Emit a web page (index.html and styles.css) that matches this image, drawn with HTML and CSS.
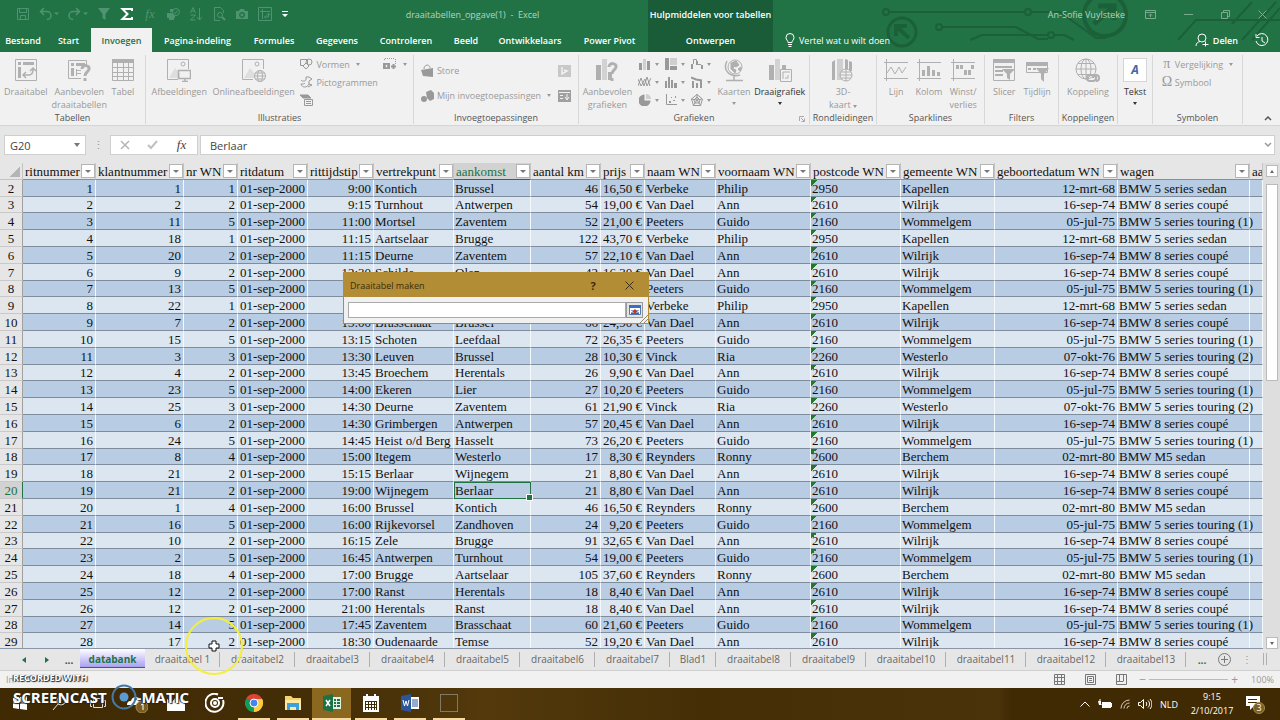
FILE: index.html
```html
<!DOCTYPE html>
<html lang="nl">
<head>
    <meta charset="UTF-8">
    <meta name="viewport" content="width=device-width, initial-scale=1.0">
    <title>draaitabellen_opgave(1) - Excel</title>
    <link rel="stylesheet" href="styles.css">
</head>
<body>
    <header class="top">
        <!-- circuit decoration -->
        <svg class="circuit" width="400" height="52" viewBox="0 0 400 52" fill="none" stroke="#1b6039" stroke-width="2">
            <circle cx="6" cy="12" r="3"/><path d="M9 12H145M151 12H158"/><circle cx="148" cy="12" r="3"/>
            <path d="M158 12 L180 12 L216 38 H226"/>
            <circle cx="59" cy="27" r="3"/><path d="M62 27H136L158 39H168"/>
            <path d="M90 40 L102 35 H168"/><circle cx="171" cy="35" r="3"/><path d="M174 35H184L194 40"/>
            <circle cx="22" cy="32" r="14" stroke-width="3"/><path d="M29 38L17 27M16 36V26H27" stroke-width="4"/>
            <circle cx="225" cy="15" r="21" stroke-width="4"/><path d="M214 24L232 8M218 6H234V20" stroke-width="5"/>
            <path d="M298 40L316 20H400M362 40L396 2M372 40L400 8M352 24L372 2"/>
        </svg>

        <div class="titlebar">
            <div class="quick">
                <button aria-label="Opslaan"><svg width="14" height="14" viewBox="0 0 14 14" fill="none" stroke="currentColor"><path d="M1.500 1.500h11v11h-11zM3.500 1.500v4h7v-4M4.500 12.500v-4h5v4"/></svg></button>
                <button aria-label="Ongedaan maken"><svg width="20" height="14" viewBox="0 0 20 14" fill="none" stroke="currentColor" stroke-width="1.500"><path d="M5 1L1.500 4.500 5 8M2 4.500h6a3.500 3.500 0 0 1 0 8"/><path d="M15 5.500h5l-2.500 2.500z" fill="currentColor" stroke="none"/></svg></button>
                <button aria-label="Opnieuw"><svg width="20" height="14" viewBox="0 0 20 14" fill="none" stroke="currentColor" stroke-width="1.500"><path d="M8 1l3.500 3.500L8 8M11 4.500H5a3.500 3.500 0 0 0 0 8"/><path d="M15 5.500h5l-2.500 2.500z" fill="currentColor" stroke="none"/></svg></button>
                <button aria-label="Filter"><svg width="14" height="14" viewBox="0 0 14 14" fill="currentColor"><path d="M1 1h12L8.500 7v6l-3-2V7z"/></svg></button>
                <button class="sum" aria-label="AutoSom"><svg width="14" height="14" viewBox="0 0 14 14" fill="none" stroke="currentColor" stroke-width="2"><path d="M12 4V2H2.500L7.500 7l-5 5H12v-2"/></svg></button>
                <button class="fx" aria-label="Functie invoegen"><i>fx</i></button>
                <button aria-label="Afdrukken"><svg width="14" height="14" viewBox="0 0 14 14" fill="currentColor"><path d="M4 2h5v3H4zM1 6h8v5H8v2H3v-2H1z"/><circle cx="10" cy="5" r="3.500" fill="#217346" stroke="currentColor"/><path d="M8.500 5l1 1.500 2-3" fill="none" stroke="currentColor"/></svg></button>
                <button aria-label="Sorteren"><svg width="14" height="14" viewBox="0 0 14 14" fill="none" stroke="currentColor"><path d="M1.500 6L4 .500 6.500 6M2.500 4h3M1.500 8h5l-5 5h5M10.500 1v12M8 10l2.500 3 2.500-3"/></svg></button>
                <button aria-label="Afdrukvoorbeeld"><svg width="14" height="14" viewBox="0 0 14 14" fill="none" stroke="currentColor"><path d="M2.500 13.500V.500h6l3 3V6M2.500 13.500H8"/><circle cx="8" cy="8" r="2.500"/><path d="M10 10l3 3" stroke-width="2"/></svg></button>
                <button aria-label="Camera"><svg width="14" height="14" viewBox="0 0 14 14" fill="currentColor" fill-rule="evenodd"><path d="M1 4h3l1-2h4l1 2h3v8H1zM7 5a3 3 0 1 0 .1 0zM7 6.500a1.500 1.500 0 1 1-.1 0z"/></svg></button>
                <button aria-label="Draaitabel"><svg width="14" height="14" viewBox="0 0 14 14" fill="none" stroke="currentColor"><path d="M.500.500h13v13H.500zM4.500 2v10M2 4.500h10M7 10h3.500V7M8.500 8l2-1.500 2 1.500M8 8.500L6.500 10 8 11.500"/></svg></button>
                <button class="more" aria-label="Werkbalk aanpassen"><svg width="8" height="8" viewBox="0 0 8 8" fill="currentColor"><path d="M1 1h6v1H1zM1 4h6L4 7z"/></svg></button>
            </div>
            <div class="doc-title">draaitabellen_opgave(1) &nbsp;-&nbsp; Excel</div>
            <div class="context-title">Hulpmiddelen voor tabellen</div>
            <div class="account">An-Sofie Vuylsteke</div>
            <div class="window-btns">
                <button aria-label="Lintweergave"><svg width="11" height="9" viewBox="0 0 11 9" fill="none" stroke="currentColor"><path d="M.500.500h10v8H.500zM.500 2.500h10M5.500 7V4M4 5.500L5.500 4 7 5.500"/></svg></button>
                <button aria-label="Minimaliseren"><svg width="9" height="9" viewBox="0 0 9 9" stroke="currentColor"><path d="M0 4.500h9"/></svg></button>
                <button aria-label="Verkleinen"><svg width="9" height="9" viewBox="0 0 9 9" fill="none" stroke="currentColor"><path d="M.500 2.500h6v6h-6zM2.500 2.500v-2h6v6h-2"/></svg></button>
                <button aria-label="Sluiten"><svg width="9" height="9" viewBox="0 0 9 9" stroke="currentColor"><path d="M.500.500l8 8M8.500.500l-8 8"/></svg></button>
            </div>
        </div>

        <nav class="tabs">
            <button>Bestand</button>
            <button>Start</button>
            <button class="active">Invoegen</button>
            <button>Pagina-indeling</button>
            <button>Formules</button>
            <button>Gegevens</button>
            <button>Controleren</button>
            <button>Beeld</button>
            <button>Ontwikkelaars</button>
            <button>Power Pivot</button>
            <button class="context">Ontwerpen</button>
            <button class="tell"><svg width="10" height="14" viewBox="0 0 10 14" fill="none" stroke="currentColor"><path d="M3 9.500C3 7.500 1 7 1 4.500a4 4 0 0 1 8 0C9 7 7 7.500 7 9.500zM3 11.500h4M3.500 13.500h3"/></svg>Vertel wat u wilt doen</button>
            <button class="share"><svg width="14" height="14" viewBox="0 0 14 14" fill="none" stroke="currentColor"><circle cx="7" cy="5" r="4"/><path d="M1 13c0-3 2-4 4-4.500M7.500 11.500h6M10.500 8.500v5"/></svg>Delen</button>
            <button class="history" aria-label="Versiegeschiedenis"><svg width="14" height="14" viewBox="0 0 14 14" fill="none" stroke="currentColor"><path d="M2 3a6 6 0 1 1-1 5M1 1v3.500h3.500M7 4v4l3 2"/></svg></button>
        </nav>
    </header>

    <section class="ribbon">
        <div class="group tables">
            <div class="tools">
                <button class="big"><svg width="24" height="24" viewBox="0 0 24 24" fill="none" stroke="currentColor"><path d="M1.500 1.500h21v21h-21z"/><path d="M4 4h3v3H4zM9 4h11v3H9zM4 9h3v11H4z" fill="currentColor" stroke="none"/><path d="M10 17h5c3 0 4-2 4-6M16 13l3-3 3 3M12 14l-3 3 3 3" stroke-width="1.500"/></svg>Draaitabel</button>
                <button class="big"><svg width="24" height="24" viewBox="0 0 24 24" fill="none" stroke="currentColor"><path d="M14 20.500H1.500v-18h18V7"/><path d="M4 5h3v3H4zM9 5h9v3H9zM4 10h3v8H4z" fill="currentColor" stroke="none"/><path d="M9.500 11v7M9 12.500h5M9 15.500h5"/><path d="M15 11c0-5 8-4 7 0-.500 3-4 3-4 7M18 20v3" stroke-width="3"/></svg>Aanbevolen<br>draaitabellen</button>
                <button class="big"><svg width="24" height="24" viewBox="0 0 24 24" fill="none" stroke="currentColor"><path d="M1.500 1.500h21v21h-21zM1 9.500h22M1 14.500h22M1 18.500h22M6.500 5v17M12.500 5v17M17.500 5v17"/><path d="M1 1h22v4H1z" fill="currentColor" stroke="none"/></svg>Tabel</button>
            </div>
            <h2>Tabellen</h2>
        </div>
        <div class="group pictures">
            <div class="tools">
                <button class="big"><svg width="24" height="24" viewBox="0 0 24 24" fill="none" stroke="currentColor"><path d="M11 21.500H.500v-20h21V11"/><path d="M2 20l6-10 5 6v4z" fill="#dedede" stroke="none"/><circle cx="16" cy="6" r="2"/><path d="M11.500 12.500h12v8h-12zM15 23.500h6M18 20v3" stroke-width="1.500"/></svg>Afbeeldingen</button>
                <button class="big"><svg width="24" height="24" viewBox="0 0 24 24" fill="none" stroke="currentColor"><path d="M11 21.500H.500v-20h21V11"/><path d="M2 20l6-10 5 6v4z" fill="#dedede" stroke="none"/><circle cx="15" cy="6" r="2"/><circle cx="18" cy="18" r="5.500"/><ellipse cx="18" cy="18" rx="2.500" ry="5.500"/><path d="M12.500 18h11M13 15h10M13 21h10"/></svg>Onlineafbeeldingen</button>
                <div class="stack">
                    <button><svg width="13" height="12" viewBox="0 0 13 12" fill="none" stroke="currentColor"><path d="M.500 1.500h7v6h-7z"/><circle cx="9" cy="4" r="3"/><path d="M6 5l3 3-3 3-3-3z" fill="#f1f1f1"/></svg>Vormen <span class="arrow"></span></button>
                    <button><svg width="13" height="12" viewBox="0 0 13 12" fill="none" stroke="currentColor"><path d="M1 4c2 2 4 1 5 0V1h3l3 2-3 2v3c-2 4-7 4-8 0 2 0 3 0 4-1M9 8l3 1-4 2"/></svg>Pictogrammen</button>
                    <button aria-label="SmartArt"><svg width="13" height="12" viewBox="0 0 13 12" fill="none" stroke="currentColor"><path d="M0 1h8l3 3H3z" fill="currentColor"/><path d="M4.500 5.500h8v6h-8zM6 7.500h5M6 9.500h5" fill="#f1f1f1"/></svg></button>
                </div>
                <div class="stack">
                    <button aria-label="Schermopname"><svg width="14" height="12" viewBox="0 0 14 12" fill="none" stroke="currentColor"><path d="M1.500 1v2M12.500 1v5M2 .500h10" stroke-dasharray="1 1"/><path d="M0 5h7v6H0z" fill="currentColor" stroke="none"/><circle cx="3.500" cy="8" r="1.500" fill="#f1f1f1"/><path d="M8 8.500h5M10.500 6v5" stroke-width="2"/></svg><span class="arrow"></span></button>
                </div>
            </div>
            <h2>Illustraties</h2>
        </div>
        <div class="group addins">
            <div class="tools">
                <div class="stack wide">
                    <button><svg width="13" height="14" viewBox="0 0 13 14" fill="currentColor"><path d="M0 6l12-2v9l-10-1z"/><path d="M3 5c0-5 6-5 6-1" fill="none" stroke="currentColor"/></svg>Store</button>
                    <button><svg width="13" height="14" viewBox="0 0 13 14" fill="currentColor"><path d="M5 3l5-2 3 3v6l-4 2-3-3z"/><circle cx="3" cy="10" r="3"/></svg>Mijn invoegtoepassingen <span class="arrow"></span></button>
                </div>
                <div class="stack wide">
                    <button aria-label="Bing Maps"><svg width="13" height="14" viewBox="0 0 13 14" fill="none"><path d="M0 1h13v12H0z" fill="#c8c8c8"/><path d="M4 3v7l5-3-3-1" stroke="#f1f1f1" stroke-width="1.500"/></svg></button>
                    <button aria-label="People Graph"><svg width="13" height="14" viewBox="0 0 13 14" fill="none"><path d="M0 1h13v12H0z" fill="#a0a0a0"/><path d="M1 3.500h11M2 6.500h3M2 9.500h3M9 5v5M7 8l2 3 2-3" stroke="#f1f1f1"/></svg></button>
                </div>
            </div>
            <h2>Invoegtoepassingen</h2>
        </div>
        <div class="group charts">
            <div class="tools">
                <button class="big"><svg width="24" height="24" viewBox="0 0 24 24" fill="currentColor"><path d="M1 7h5v15H1zM13 14h4v8h-4z"/><path d="M7 1h5v21H7z" fill="#d2d2d2"/><path d="M14 9c0-5 8-4 7 0-.500 3-4 3-4 7M17 20v3" fill="none" stroke="currentColor" stroke-width="3"/></svg>Aanbevolen<br>grafieken</button>
                <div class="chart-grid">
                    <button aria-label="Kolomdiagram"><svg width="12" height="12" viewBox="0 0 12 12" fill="currentColor"><path d="M0 5h3v7H0zM8 3h3v9H8z"/><path d="M4 1h3v11H4z" fill="#cfcfcf"/></svg><span class="arrow"></span></button>
                    <button aria-label="Hiërarchie"><svg width="12" height="12" viewBox="0 0 12 12" fill="currentColor"><path d="M0 0h4v12H0zM5 8h7v4H5z"/><path d="M5 0h7v7H5z" fill="#cfcfcf"/></svg><span class="arrow"></span></button>
                    <button aria-label="Waterval"><svg width="12" height="12" viewBox="0 0 12 12" fill="currentColor"><path d="M0 6h2v5H0zM5 3h2v4H5zM10 7h2v4h-2z"/><path d="M2.500 6V1.500h3V4M7 6.500h3" fill="none" stroke="currentColor"/></svg><span class="arrow"></span></button>
                    <button aria-label="Lijndiagram"><svg width="13" height="12" viewBox="0 0 13 12" fill="none" stroke="currentColor"><path d="M0 10L3 2l3 8 3-9 3 9M0 3l3 7 4-7 2 7 4-8"/></svg><span class="arrow"></span></button>
                    <button aria-label="Statistisch"><svg width="12" height="12" viewBox="0 0 12 12" fill="currentColor"><path d="M0 5h2v7H0zM3 1h2v11H3zM6 4h2v8H6zM9 7h3v5H9z"/></svg><span class="arrow"></span></button>
                    <button aria-label="Combinatie"><svg width="12" height="12" viewBox="0 0 12 12" fill="currentColor"><path d="M1 5h2v7H1zM5 7h2v5H5zM9 5h2v7H9z"/><path d="M0 1.500l5 2 6 1" fill="none" stroke="currentColor" stroke-width="2"/></svg><span class="arrow"></span></button>
                    <button aria-label="Cirkeldiagram"><svg width="12" height="12" viewBox="0 0 12 12" fill="currentColor"><path d="M5.500.500v6h6a6 6 0 1 1-6-6z"/><path d="M7 0a5 5 0 0 1 5 5H7z" fill="#cfcfcf"/></svg><span class="arrow"></span></button>
                    <button aria-label="Spreiding"><svg width="12" height="12" viewBox="0 0 12 12" fill="currentColor"><path d="M1.500 0v10.500H12" fill="none" stroke="currentColor"/><path d="M4 7h2v2H4zM6 3h1v1H6zM8 6h2v1H8zM10 2h1v2h-1z"/></svg><span class="arrow"></span></button>
                    <button aria-label="Radar"><svg width="12" height="12" viewBox="0 0 12 12" fill="none" stroke="currentColor"><path d="M6 .500L11.500 5l-2 6.500h-7L.500 5zM6 3l3 3-1 3H4L3 6zM6 0v6l5-1M6 6l4 6M6 6l-4 6M6 6L0 5"/></svg><span class="arrow"></span></button>
                </div>
                <button class="big"><svg width="24" height="24" viewBox="0 0 24 24" fill="none" stroke="currentColor"><circle cx="13" cy="9" r="7"/><path d="M9 5l5-2 3 4-3 2-2-1-1 3 3 1-1 3-4-4zM16 11l3-2-1 4z" fill="currentColor"/><path d="M5 3c-5 9 3 17 13 14M12 18v4M4 22.500h17" stroke-width="1.500"/></svg>Kaarten<span class="arrow"></span></button>
                <button class="big enabled"><svg width="24" height="24" viewBox="0 0 24 24" fill="#b0b0b0"><path d="M1 7h5v15H1z"/><path d="M7 1h5v21H7z" fill="#d2d2d2"/><path d="M14 7h4v4h-4z"/><path d="M12.500 11.500h11v12h-11zM15 14v7M15 14h7M17 20h3v-3" fill="#f1f1f1" stroke="#b0b0b0"/></svg>Draaigrafiek<span class="arrow"></span></button>
            </div>
            <h2>Grafieken</h2>
            <svg class="launcher" width="6" height="6" viewBox="0 0 6 6" fill="none" stroke="#aaa"><path d="M.500 5V.500H5M2 2l3 3M5.500 2.500v3h-3"/></svg>
        </div>
        <div class="group tours">
            <div class="tools">
                <button class="big"><svg width="24" height="24" viewBox="0 0 24 24" fill="currentColor"><path d="M1 4l3-2v20H1zM14 1l3 1v10h-3zM18 3l3 1v9h-3z"/><path d="M6 1h6v21H6z" fill="#cfcfcf"/><circle cx="15" cy="17" r="6" fill="#f1f1f1" stroke="currentColor"/><path d="M9 17h12M15 11v12M10 14h10M10 20h10" stroke="currentColor"/></svg><span>3D-<br>kaart <span class="arrow"></span></span></button>
            </div>
            <h2>Rondleidingen</h2>
        </div>
        <div class="group sparks">
            <div class="tools">
                <button class="big"><svg width="24" height="24" viewBox="0 0 24 24" fill="none" stroke="currentColor"><path d="M2.500 1v22M0 4.500h24M0 20.500h24M3 15l4-6 4 7 4-7 3 6 4-6"/></svg>Lijn</button>
                <button class="big"><svg width="24" height="24" viewBox="0 0 24 24" fill="none" stroke="currentColor"><path d="M2.500 1v22M0 4.500h24M0 20.500h24"/><path d="M5 12h3v6H5zM10 8h3v10h-3zM15 12h3v6h-3zM20 14h3v4h-3z" fill="currentColor" stroke="none"/></svg>Kolom</button>
                <button class="big"><svg width="24" height="24" viewBox="0 0 24 24" fill="none" stroke="currentColor"><path d="M2.500 1v22M0 4.500h24M0 20.500h24"/><path d="M5 7h3v4H5zM9 7h3v4H9zM13 12h3v5h-3zM17 12h3v5h-3zM20 7h3v4h-3z" fill="currentColor" stroke="none"/></svg>Winst/<br>verlies</button>
            </div>
            <h2>Sparklines</h2>
        </div>
        <div class="group filters">
            <div class="tools">
                <button class="big"><svg width="24" height="24" viewBox="0 0 24 24" fill="none" stroke="currentColor"><path d="M1.500 1.500h21v21h-21z"/><path d="M1 1h22v4H1zM3 8h17v2H3zM3 12h8v2H3zM3 16h8v2H3zM10 11h13l-5 5v6l-3-2v-4z" fill="currentColor" stroke="none"/></svg>Slicer</button>
                <button class="big"><svg width="24" height="24" viewBox="0 0 24 24" fill="none" stroke="currentColor"><path d="M1.500 4.500h21v10h-21z"/><path d="M1 4h22v4H1zM3 10h3v2H3zM8 10h3v2H8zM11 10h13l-5 6v8l-3-3v-5z" fill="currentColor" stroke="none"/></svg>Tijdlijn</button>
            </div>
            <h2>Filters</h2>
        </div>
        <div class="group links">
            <div class="tools">
                <button class="big"><svg width="26" height="24" viewBox="0 0 26 24" fill="none" stroke="currentColor"><circle cx="11" cy="11" r="10"/><ellipse cx="11" cy="11" rx="5" ry="10"/><path d="M1 11h20M3 5.500h16M3 16.500h12M11 1v20"/><path d="M12 20a3 3 0 0 1 3-3h3a3 3 0 0 1 0 6h-3a3 3 0 0 1-3-3M18 20a3 3 0 0 1 3-3 3 3 0 0 1 0 6" stroke-width="2"/></svg>Koppeling</button>
            </div>
            <h2>Koppelingen</h2>
        </div>
        <div class="group text">
            <div class="tools">
                <button class="big enabled"><span class="text-icon">A</span>Tekst<span class="arrow"></span></button>
            </div>
        </div>
        <div class="group symbols">
            <div class="tools">
                <div class="stack">
                    <button><span class="sym">π</span>Vergelijking <span class="arrow"></span></button>
                    <button><span class="sym">Ω</span>Symbool</button>
                </div>
            </div>
            <h2>Symbolen</h2>
        </div>
        <button class="collapse" aria-label="Lint samenvouwen"><svg width="8" height="6" viewBox="0 0 8 6" fill="none" stroke="#555" stroke-width="1.500"><path d="M1 5l3-3 3 3"/></svg></button>
    </section>

    <section class="formula-bar">
        <div class="name-box">
            <input type="text" value="G20" aria-label="Naamvak">
            <span class="arrow"></span>
        </div>
        <span class="dots">⋮</span>
        <div class="fx-btns">
            <button aria-label="Annuleren"><svg width="10" height="10" viewBox="0 0 10 10" stroke="#b5b5b5" stroke-width="1.500"><path d="M1 1l8 8M9 1l-8 8"/></svg></button>
            <button aria-label="Invoeren"><svg width="11" height="10" viewBox="0 0 11 10" fill="none" stroke="#c0c0c0" stroke-width="2"><path d="M1 5l3 3 6-7"/></svg></button>
            <button class="fx" aria-label="Functie invoegen"><i>fx</i></button>
        </div>
        <div class="formula">
            <input type="text" value="Berlaar" aria-label="Formulebalk">
            <svg width="8" height="6" viewBox="0 0 8 6" fill="none" stroke="#999" stroke-width="1.500"><path d="M1 1l3 3 3-3"/></svg>
        </div>
    </section>

    <main class="sheet">
        <div class="grid-wrap">
            <table class="grid">
                <colgroup id="cols"></colgroup>
                <thead><tr id="head"></tr></thead>
                <tbody id="rows"></tbody>
            </table>
        </div>
        <div class="scrollbar">
            <button aria-label="Omhoog"><span class="arrow up"></span></button>
            <div class="thumb"></div>
            <button class="down" aria-label="Omlaag"><span class="arrow"></span></button>
        </div>
    </main>

    <nav class="sheet-tabs">
        <button class="nav" aria-label="Vorige"><span class="tri left"></span></button>
        <button class="nav" aria-label="Volgende"><span class="tri"></span></button>
        <button class="nav ellipsis">...</button>
        <button class="tab active">databank</button>
        <button class="tab">draaitabel 1</button>
        <button class="tab">draaitabel2</button>
        <button class="tab">draaitabel3</button>
        <button class="tab">draaitabel4</button>
        <button class="tab">draaitabel5</button>
        <button class="tab">draaitabel6</button>
        <button class="tab">draaitabel7</button>
        <button class="tab short">Blad1</button>
        <button class="tab">draaitabel8</button>
        <button class="tab">draaitabel9</button>
        <button class="tab long">draaitabel10</button>
        <button class="tab long">draaitabel11</button>
        <button class="tab long">draaitabel12</button>
        <button class="tab long">draaitabel13</button>
        <button class="nav end">...</button>
        <button class="add" aria-label="Nieuw blad"><svg width="13" height="13" viewBox="0 0 13 13" fill="none" stroke="#777"><circle cx="6.500" cy="6.500" r="6"/><path d="M3 6.500h7M6.500 3v7"/></svg></button>
        <span class="dots">⋮</span>
        <span class="splitter"></span>
    </nav>

    <footer class="status">
        <span>In</span>
        <div class="views">
            <button aria-label="Normaal"><svg width="11" height="11" viewBox="0 0 11 11" fill="none" stroke="#777"><path d="M.500.500h10v10H.500zM.500 3.500h10M.500 7.500h10M3.500.500v10M7.500.500v10"/></svg></button>
            <button aria-label="Pagina-indeling"><svg width="11" height="11" viewBox="0 0 11 11" fill="none" stroke="#777"><path d="M.500.500h10v10H.500zM2.500 2.500h6v6h-6zM4 4.500h3M4 6.500h3"/></svg></button>
            <button aria-label="Pagina-eindevoorbeeld"><svg width="11" height="11" viewBox="0 0 11 11" fill="none" stroke="#777"><path d="M.500.500h10v10H.500zM3.500 1v6M7.500 1v6M.500 7.500h7"/></svg></button>
        </div>
        <div class="zoom">
            <button aria-label="Uitzoomen">−</button>
            <span class="track"></span>
            <button aria-label="Inzoomen">+</button>
        </div>
        <span class="percent">100%</span>
    </footer>

    <footer class="taskbar">
        <div class="apps">
            <button aria-label="Start"><svg width="14" height="14" viewBox="0 0 14 14" fill="#fff"><path d="M0 2l6-1v5.500H0zM7 1l7-1v6.500H7zM0 7.500h6V13l-6-1zM7 7.500h7V14l-7-1z"/></svg></button>
            <button aria-label="Zoeken"><svg width="14" height="14" viewBox="0 0 14 14" fill="none" stroke="#ddd"><circle cx="9" cy="5" r="4"/><path d="M6 8l-5 6"/></svg></button>
            <button aria-label="Taakweergave"><svg width="16" height="14" viewBox="0 0 16 14" fill="none" stroke="#ddd"><path d="M3.500 2.500h9v9h-9zM2 4.500H.500v6H2M14 4.500h1.500v6H14"/></svg></button>
            <button aria-label="OneDrive"><svg width="22" height="20" viewBox="0 0 22 20"><path d="M1 12c0-4 3-4 4-4 1-5 8-5 9-1 3 0 3 5 1 5z" fill="#fff"/><circle cx="16" cy="14" r="6" fill="#7a5d22" stroke="#a8894c"/><path d="M15 12l2-1v6" fill="none" stroke="#fff"/></svg></button>
            <button aria-label="Foto's"><svg width="18" height="16" viewBox="0 0 18 16" fill="#fff"><path d="M0 4l5 3 4-5 3 3 2-4 4 5v10H0z"/></svg></button>
            <button aria-label="Groove"><svg width="20" height="20" viewBox="0 0 20 20" fill="none" stroke="#fff" stroke-width="2"><path d="M13 1.500A9 9 0 1 0 18 7M13 5h5"/><circle cx="10" cy="10" r="4"/><circle cx="10" cy="10" r="1" fill="#fff"/></svg></button>
            <button class="open" aria-label="Chrome"><svg width="18" height="18" viewBox="0 0 18 18"><path d="M9 9L1.200 4.500A9 9 0 0 1 16.800 4.500z" fill="#db4437"/><path d="M9 9h9A9 9 0 0 0 16.800 4.500H9z" fill="#ffcd40"/><path d="M9 9L9 18a9 9 0 0 0 7.800-13.500L13 4.500z" fill="#ffcd40"/><path d="M9 9l0 9A9 9 0 0 1 1.200 4.500z" fill="#0f9d58"/><path d="M9 4.500h8" stroke="#db4437"/><circle cx="9" cy="9" r="4" fill="#4285f4" stroke="#fff"/></svg></button>
            <button class="open" aria-label="Verkenner"><svg width="18" height="16" viewBox="0 0 18 16"><path d="M1 1h6l2 2h8v12H1z" fill="#f5d36e"/><path d="M1 5h16v10H1z" fill="#ffe9a0"/><path d="M3 8h12v7h-3v-3H6v3H3z" fill="#3ba0dc"/></svg></button>
            <button class="open current" aria-label="Excel"><svg width="18" height="18" viewBox="0 0 18 18"><path d="M9 3h9v12H9z" fill="#dff0e4"/><path d="M11 5h2v2h-2zM14 5h3v2h-3zM11 8h2v2h-2zM14 8h3v2h-3zM11 11h2v2h-2zM14 11h3v2h-3z" fill="#217346"/><path d="M0 2l10-2v18L0 16z" fill="#1e7145"/><path d="M3 6l4 6M7 6l-4 6" stroke="#fff" stroke-width="1.500"/></svg></button>
            <button class="open" aria-label="Agenda"><svg width="18" height="18" viewBox="0 0 18 18"><path d="M1 2h16v16H1z" fill="#fff"/><path d="M5 0v4M13 0v4" stroke="#fff" stroke-width="2"/><path d="M3 7h12v9H3z" fill="#402a04"/><path d="M4 9h10M4 12h10M4 15h10" stroke="#fff" stroke-width="2" stroke-dasharray="2 1"/></svg></button>
            <button class="open" aria-label="Word"><svg width="18" height="18" viewBox="0 0 18 18"><path d="M9 3h9v12H9z" fill="#fff"/><path d="M11 6h6M11 8h6M11 10h6M11 12h6" stroke="#2b579a"/><path d="M0 2l10-2v18L0 16z" fill="#2b579a"/><path d="M2 6l1.500 6L5 7l1.500 5L8 6" fill="none" stroke="#fff"/></svg></button>
            <button class="open" aria-label="Opname"><svg width="20" height="20" viewBox="0 0 20 20" fill="none"><path d="M1.500 1.500h17v17h-17z" stroke="#111"/><path d="M1.500 1.500h17v17h-17z" stroke="#f3e3c0" stroke-dasharray="1 1"/></svg></button>
        </div>
        <div class="tray">
            <svg width="10" height="6" viewBox="0 0 10 6" fill="none" stroke="#fff"><path d="M.500 5.500L5 1l4.500 4.500"/></svg>
            <svg width="14" height="10" viewBox="0 0 14 10" fill="#fff"><path d="M4 3h9v6H4zM0 2h3v4H1z"/><path d="M3.500 5.500h2M13.500 4v4M2 0v2" stroke="#fff"/></svg>
            <svg width="10" height="10" viewBox="0 0 10 10" fill="none" stroke="#d8cdb8"><path d="M1 9.500A8.500 8.500 0 0 1 9.500 1M4 9.500A5.500 5.500 0 0 1 9.500 4M7 9.500A2.500 2.500 0 0 1 9.500 7"/></svg>
            <svg width="14" height="12" viewBox="0 0 14 12" fill="none" stroke="#fff"><path d="M.500 4.500h2l3-3v9l-3-3h-2zM8 4c1 1 1 3 0 4M10 2.500c2 2 2 5 0 7M12 1c2.500 3 2.500 7 0 10"/></svg>
            <span>NLD</span>
            <div class="clock">9:15<br>2/10/2017</div>
            <div class="notice">
                <svg width="14" height="14" viewBox="0 0 14 14"><path d="M0 0h14v10H8l-4 4v-4H0z" fill="#fff"/><path d="M2 3.500h9M2 6.500h9" stroke="#402a04"/></svg>
                <span class="badge">3</span>
            </div>
        </div>
    </footer>

    <form class="dialog" role="dialog" aria-label="Draaitabel maken">
        <div class="dialog-title">
            <span>Draaitabel maken</span>
            <button type="button" aria-label="Help">?</button>
            <button type="button" aria-label="Sluiten"><svg width="9" height="9" viewBox="0 0 9 9" stroke="#3a2c0c"><path d="M.500.500l8 8M8.500.500l-8 8"/></svg></button>
        </div>
        <div class="dialog-body">
            <input type="text" aria-label="Tabel/bereik">
            <button type="button" aria-label="Dialoogvenster uitvouwen"><svg width="12" height="10" viewBox="0 0 12 10"><path d="M.500.500h11v9H.500z" fill="#fff" stroke="#5578b0"/><path d="M0 0h12v3H0z" fill="#3d6cc0"/><path d="M2 5.500h8M2 7.500h8" stroke="#8fa5c8"/><path d="M6 4l3 3H7v1h3v1H2V8h3V7H3z" fill="#c8322c"/></svg></button>
        </div>
        <svg class="grip" width="8" height="8" viewBox="0 0 8 8" stroke="#8e8874"><path d="M0 8L8 0M4 8l4-4"/></svg>
    </form>

    <div class="click-ring">
        <svg width="12" height="12" viewBox="0 0 12 12"><path d="M4 1h4v3h3v4H8v3H4V8H1V4h3z" fill="#fff" stroke="#111"/></svg>
    </div>

    <div class="watermark">
        <div class="small">RECORDED WITH</div>
        <div class="large">SCREENCAST<svg width="26" height="26" viewBox="0 0 26 26"><circle cx="13" cy="13" r="11.500" fill="none" stroke="#4579a8" stroke-width="2"/><circle cx="13" cy="13" r="4.500" fill="#5b9bd5"/></svg><span class="dash">-</span>MATIC</div>
    </div>

    <script src="script.js"></script>
</body>
</html>
```
FILE: styles.css
```css
* {
    margin: 0;
    padding: 0;
    box-sizing: border-box;
}

body {
    display: flex;
    flex-direction: column;
    height: 100vh;
    overflow: hidden;
    position: relative;
    font-family: "Open Sans", "Noto Sans", sans-serif;
    font-size: 9px;
    color: #444;
    background: #e6e6e6;
}

button,
input {
    font: inherit;
    color: inherit;
    border: none;
    background: none;
}

button {
    display: flex;
    align-items: center;
    justify-content: center;
    white-space: nowrap;
}

svg {
    flex: none;
}

.arrow {
    display: inline-block;
    flex: none;
    border: 2px solid transparent;
    border-top: 3px solid currentColor;
    border-bottom: none;
}

.arrow.up {
    transform: rotate(180deg);
}

/* title bar */
.top {
    position: relative;
    flex: none;
    background: #217346;
    color: #fff;
}

.circuit {
    position: absolute;
    top: 0;
    right: 0;
}

.titlebar,
.tabs {
    position: relative;
}

.titlebar {
    display: flex;
    height: 28px;
    align-items: center;
}

.quick {
    display: flex;
    align-items: center;
    gap: 9px;
    width: 379px;
    padding-left: 16px;
    color: #4f9470;
}

.quick .sum,
.quick .more {
    color: #fff;
}

.fx {
    width: 14px;
    font-family: "Liberation Serif", serif;
    font-size: 13px;
}

.doc-title {
    width: 187px;
    text-align: center;
    color: #b4d3c1;
}

.doc-title,
.account {
    white-space: nowrap;
}

.context-title {
    display: flex;
    align-items: center;
    justify-content: center;
    align-self: stretch;
    width: 125px;
    margin-left: 82px;
    background: #1a5c38;
    font-weight: 600;
    white-space: nowrap;
}

.account {
    margin-left: auto;
    color: #b4d3c1;
}

.window-btns {
    display: flex;
    gap: 28px;
    padding: 0 13px 0 20px;
    color: #79ab8f;
}

.tabs {
    display: grid;
    grid-template-columns: 46px 45px 61px 91px 62px 64px 74px 46px 82px 77px 125px auto 1fr auto;
    height: 24px;
    font-weight: 600;
}

.tabs .active {
    background: #f1f1f1;
    color: #217346;
}

.tabs .context {
    background: #1a5c38;
}

.tabs .tell {
    gap: 4px;
    padding-left: 12px;
    font-weight: 400;
}

.tabs .share {
    justify-content: flex-end;
    gap: 4px;
    padding-right: 6px;
}

.tabs .history {
    padding: 0 11px;
}

/* ribbon */
.ribbon {
    display: flex;
    flex: none;
    height: 74px;
    padding-top: 3px;
    background: #f1f1f1;
    border-bottom: 1px solid #d5d5d5;
    color: #999;
}

.group {
    display: flex;
    flex-direction: column;
    position: relative;
    border-right: 1px solid #d8d8d8;
    margin-bottom: 1px;
}

.group h2 {
    font-size: 9px;
    line-height: 12px;
    font-weight: 400;
    color: #555;
    text-align: center;
    white-space: nowrap;
}

.tools {
    display: flex;
    flex: 1;
    justify-content: space-evenly;
}

.big {
    flex-direction: column;
    justify-content: flex-start;
    padding-top: 3px;
    line-height: 13px;
}

.big svg {
    margin-bottom: 3px;
    color: #b0b0b0;
}

.big > .arrow {
    margin-top: 4px;
}

.enabled {
    color: #333;
}

.text-icon {
    width: 24px;
    height: 24px;
    margin-bottom: 3px;
    border: 1px solid #d5d5d5;
    background: #fff;
    color: #3a68a8;
    font-size: 12px;
    font-style: italic;
    font-weight: 700;
    line-height: 22px;
}

.tables { width: 146px; }
.pictures { width: 268px; }
.addins { width: 165px; }
.charts { width: 231px; }
.tours { width: 67px; }
.sparks { width: 108px; }
.filters { width: 74px; }
.links { width: 59px; }
.text { width: 35px; }
.symbols { width: 90px; }

.tables .tools {
    padding-right: 6px;
}

.stack {
    display: flex;
    flex-direction: column;
}

.stack button {
    height: 18px;
    gap: 3px;
    justify-content: flex-start;
}

.stack.wide {
    padding-top: 3px;
}

.stack.wide button {
    height: 25px;
}

.stack .arrow {
    margin-left: 3px;
}

.sym {
    width: 10px;
    font-family: "Liberation Serif", serif;
    font-size: 14px;
}

.chart-grid {
    display: grid;
    grid-template-columns: repeat(3, 26px);
    grid-template-rows: repeat(3, 18px);
}

.chart-grid button {
    gap: 4px;
}

.launcher {
    position: absolute;
    right: 4px;
    bottom: 2px;
}

.collapse {
    align-self: flex-end;
    margin: 0 8px 4px auto;
}

/* formula bar */
.formula-bar {
    display: flex;
    flex: none;
    height: 37px;
    padding: 9px 5px 8px 4px;
    font-size: 11px;
}

.name-box,
.fx-btns,
.formula {
    display: flex;
    align-items: center;
    background: #fff;
    border: 1px solid #cfcfcf;
}

.name-box {
    width: 82px;
    padding: 0 5px;
}

.name-box .arrow {
    border-width: 4px 3px 0;
    border-top-color: #777;
}

.name-box input,
.formula input {
    flex: 1;
    min-width: 0;
}

.dots {
    width: 24px;
    text-align: center;
    line-height: 20px;
    color: #999;
}

.fx-btns {
    width: 88px;
    justify-content: space-around;
}

.formula {
    flex: 1;
    margin-left: 2px;
    padding: 0 2px 0 9px;
}

/* sheet */
.sheet {
    display: flex;
    flex: 1;
    min-height: 0;
    font-family: "Liberation Serif", serif;
    font-size: 13px;
    color: #111;
}

.grid-wrap {
    flex: 1;
    min-width: 0;
    overflow: hidden;
    border-bottom: 1px solid #8a96a5;
}

.grid {
    width: 100%;
    table-layout: fixed;
    border-collapse: separate;
    border-spacing: 0;
}

.grid th,
.grid td {
    height: 17px;
    line-height: 15px;
    white-space: nowrap;
}

.grid thead th {
    border-right: 1px solid #c4c4c4;
    border-bottom: 1px solid #8e8e8e;
    font-weight: 400;
    text-align: left;
    overflow: hidden;
}

.head-cell {
    display: flex;
    align-items: center;
    justify-content: space-between;
    height: 15px;
    padding-left: 2px;
}

.head-cell button {
    flex: none;
    width: 14px;
    height: 14px;
    background: #fff;
    border: 1px solid #b5b5b5;
    color: #777;
}

.head-cell .arrow {
    border-width: 3px 3px 0;
}

.grid thead .selected {
    background: #d2d2d2;
    border-bottom-color: #217346;
    color: #217346;
}

.grid thead .corner {
    border-color: #c4c4c4;
    background: linear-gradient(135deg, transparent 50%, #b5b5b5 50%) 10px 4px / 10px 10px no-repeat;
}

.grid tbody th {
    border-right: 1px solid #a0a0a0;
    border-bottom: 1px solid #c9c9c9;
    font-weight: 400;
    text-align: center;
}

.grid tbody .selected {
    background: #d2d2d2;
    border-right-color: #217346;
    color: #217346;
}

.grid td {
    padding: 0 2px 0 1px;
    background-color: #dce6f1;
    border-right: 1px solid #f6f9fc;
    border-bottom: 1px solid #7e8c9c;
}

.grid tbody tr:nth-child(odd) td {
    background-color: #b8cce4;
}

/* keeps the average row pitch just under 17px */
.grid tbody tr:nth-child(5n+2) > * {
    height: 16px;
    line-height: 14px;
}

.grid .num {
    text-align: right;
}

.grid .zip {
    background-image: linear-gradient(135deg, #217a2c 50%, transparent 50%);
    background-size: 6px 6px;
    background-repeat: no-repeat;
}

.grid .cursor {
    position: relative;
    outline: 1px solid #217346;
    outline-offset: -1px;
}

.grid .cursor::after {
    content: "";
    position: absolute;
    right: -3px;
    bottom: -3px;
    width: 5px;
    height: 5px;
    background: #217346;
    border: 1px solid #fff;
}

.scrollbar {
    display: flex;
    flex-direction: column;
    width: 17px;
    padding: 2px 2px 0 3px;
    background: #dedede;
}

.scrollbar button {
    height: 12px;
    background: #fff;
    border: 1px solid #bbb;
    color: #666;
}

.scrollbar .thumb {
    height: 197px;
    margin-top: 7px;
    background: #fff;
    border: 1px solid #bbb;
}

.scrollbar .down {
    margin-top: auto;
}

/* sheet tabs */
.sheet-tabs {
    display: flex;
    flex: none;
    height: 22px;
    padding-left: 12px;
    border-bottom: 1px solid #d0d0d0;
    font-size: 10px;
    color: #666;
}

.sheet-tabs .nav {
    width: 23px;
    color: #217346;
    font-weight: 700;
}

.sheet-tabs .ellipsis {
    width: 22px;
    color: #444;
}

.sheet-tabs .end {
    width: 32px;
}

.sheet-tabs .dots {
    width: 32px;
}

.tri {
    border: 3px solid transparent;
    border-left: 4px solid #217346;
    border-right: none;
}

.tri.left {
    transform: rotate(180deg);
}

.tab {
    position: relative;
    width: 75px;
    padding-bottom: 2px;
}

.tab::after {
    content: "";
    position: absolute;
    top: 3px;
    right: 0;
    width: 1px;
    height: 15px;
    background: #b0b0b0;
}

.tab.short {
    width: 46px;
}

.tab.long {
    width: 80px;
}

.tab.active {
    width: 65px;
    height: 19px;
    padding: 1px 0 0;
    background: linear-gradient(#fff, #a9a0f0);
    border-bottom: 1px solid #217346;
    color: #217346;
    font-weight: 700;
}

.tab.active::after {
    display: none;
}

.splitter {
    width: 4px;
    height: 12px;
    margin-top: 4px;
    border: 1px solid #b0b0b0;
    border-width: 0 1px;
}

/* status bar */
.status {
    display: flex;
    align-items: center;
    flex: none;
    height: 17px;
    padding: 0 6px;
    background: #f1f1f1;
    color: #999;
}

.views {
    display: flex;
    gap: 20px;
    margin-left: auto;
}

.zoom {
    display: flex;
    align-items: center;
    gap: 3px;
    margin: 0 13px 0 12px;
    font-size: 12px;
}

.track {
    width: 79px;
    height: 1px;
    background: #bbb;
}

/* taskbar */
.taskbar {
    display: flex;
    flex: none;
    justify-content: space-between;
    height: 32px;
    background: linear-gradient(90deg, #402a04 0%, #442e07 25%, #53390c 38%, #452e06 55%, #4a320a 78%, #402a04 79%);
    color: #fff;
}

.apps {
    display: flex;
}

.apps button {
    width: 39px;
    border-bottom: 2px solid transparent;
}

.apps .open {
    background: linear-gradient(#f8d9a0, #f8d9a0) center bottom / 32px 2px no-repeat border-box;
}

.apps .current {
    background: #8a6820;
    border-color: #f8d9a0;
}

.tray {
    display: flex;
    align-items: center;
    gap: 8px;
    padding-right: 16px;
}

.clock {
    width: 52px;
    text-align: center;
    line-height: 14px;
}

.notice {
    position: relative;
    width: 18px;
}

.badge {
    position: absolute;
    left: 7px;
    top: 6px;
    width: 12px;
    height: 12px;
    border: 1px solid #a8894c;
    border-radius: 50%;
    background: #7a5d22;
    line-height: 10px;
    text-align: center;
}

/* floating parts */
.dialog {
    position: absolute;
    left: 343px;
    top: 272px;
    width: 306px;
    border: 1px solid #b38c36;
    background: #f0f0f0;
}

.dialog-title {
    display: flex;
    align-items: center;
    height: 24px;
    padding: 0 6px;
    background: #b38c36;
    color: #3a2c0c;
}

.dialog-title span {
    flex: 1;
}

.dialog-title button {
    width: 16px;
    margin-right: 10px;
    margin-left: 10px;
    font-weight: 700;
    font-size: 11px;
}

.dialog-title button:last-child {
    margin-right: 5px;
}

.dialog-body {
    display: flex;
    padding: 5px 5px 5px 4px;
}

.dialog-body input {
    flex: 1;
    height: 16px;
    background: #fff;
    border: 1px solid #aaa;
}

.dialog-body button {
    width: 17px;
    height: 16px;
    border: 1px solid #999;
    background: #e4e4e4;
}

.grip {
    position: absolute;
    right: 0;
    bottom: 0;
}

.click-ring {
    position: absolute;
    left: 185px;
    top: 617px;
    display: flex;
    align-items: center;
    justify-content: center;
    width: 58px;
    height: 58px;
    border: 2px solid #f4ee3c;
    border-radius: 50%;
}

.watermark {
    position: absolute;
    left: 13px;
    top: 671px;
    color: #fff;
    font-weight: 700;
    text-shadow: 1px 1px 1px #222, -1px 0 1px #222;
    white-space: nowrap;
}

.watermark .small {
    line-height: 14px;
}

.watermark .large {
    display: flex;
    align-items: center;
    height: 24px;
    font-size: 15px;
}

.watermark .large svg {
    margin-left: 4px;
}
```
FILE: script.js
```js
const columns = [
    ["", 23], ["ritnummer", 73], ["klantnummer", 88], ["nr WN", 54],
    ["ritdatum", 70], ["rittijdstip", 66], ["vertrekpunt", 80],
    ["aankomst", 77], ["aantal km", 70], ["prijs", 44], ["naam WN", 71],
    ["voornaam WN", 95], ["postcode WN", 90], ["gemeente WN", 94],
    ["geboortedatum WN", 123], ["wagen", 132], ["aa", 13]
];

const drivers = {
    1: ["Verbeke", "Philip", "2950", "Kapellen", "12-mrt-68", "BMW 5 series sedan"],
    2: ["Van Dael", "Ann", "2610", "Wilrijk", "16-sep-74", "BMW 8 series coupé"],
    3: ["Vinck", "Ria", "2260", "Westerlo", "07-okt-76", "BMW 5 series touring (2)"],
    4: ["Reynders", "Ronny", "2600", "Berchem", "02-mrt-80", "BMW M5 sedan"],
    5: ["Peeters", "Guido", "2160", "Wommelgem", "05-jul-75", "BMW 5 series touring (1)"]
};

// klantnummer, nr WN, rittijdstip, vertrekpunt, aankomst, aantal km, prijs
const rides = [
    [1, 1, "9:00", "Kontich", "Brussel", 46, "16,50"],
    [2, 2, "9:15", "Turnhout", "Antwerpen", 54, "19,00"],
    [11, 5, "11:00", "Mortsel", "Zaventem", 52, "21,00"],
    [18, 1, "11:15", "Aartselaar", "Brugge", 122, "43,70"],
    [20, 2, "11:15", "Deurne", "Zaventem", 57, "22,10"],
    [9, 2, "12:30", "Schilde", "Olen", 42, "16,30"],
    [13, 5, "", "", "", "", ""],
    [22, 1, "", "", "", "", ""],
    [7, 2, "13:00", "Brasschaat", "Brussel", 66, "24,90"],
    [15, 5, "13:15", "Schoten", "Leefdaal", 72, "26,35"],
    [3, 3, "13:30", "Leuven", "Brussel", 28, "10,30"],
    [4, 2, "13:45", "Broechem", "Herentals", 26, "9,90"],
    [23, 5, "14:00", "Ekeren", "Lier", 27, "10,20"],
    [25, 3, "14:30", "Deurne", "Zaventem", 61, "21,90"],
    [6, 2, "14:30", "Grimbergen", "Antwerpen", 57, "20,45"],
    [24, 5, "14:45", "Heist o/d Berg", "Hasselt", 73, "26,20"],
    [8, 4, "15:00", "Itegem", "Westerlo", 17, "8,30"],
    [21, 2, "15:15", "Berlaar", "Wijnegem", 21, "8,80"],
    [21, 2, "19:00", "Wijnegem", "Berlaar", 21, "8,80"],
    [1, 4, "16:00", "Brussel", "Kontich", 46, "16,50"],
    [16, 5, "16:00", "Rijkevorsel", "Zandhoven", 24, "9,20"],
    [10, 2, "16:15", "Zele", "Brugge", 91, "32,65"],
    [2, 5, "16:45", "Antwerpen", "Turnhout", 54, "19,00"],
    [18, 4, "17:00", "Brugge", "Aartselaar", 105, "37,60"],
    [12, 2, "17:00", "Ranst", "Herentals", 18, "8,40"],
    [12, 2, "21:00", "Herentals", "Ranst", 18, "8,40"],
    [14, 5, "17:45", "Zaventem", "Brasschaat", 60, "21,60"],
    [17, 2, "18:30", "Oudenaarde", "Temse", 52, "19,20"]
];

const numeric = [0, 1, 2, 3, 4, 7, 8, 13];
const total = columns.reduce((sum, col) => sum + col[1], 0);

document.getElementById("cols").innerHTML = columns
    .map(col => `<col style="width: ${col[1] / total * 100}%">`).join("");

document.getElementById("head").innerHTML = columns.map(([name], i) => {
    if (i === 0) return '<th class="corner"></th>';
    const filter = name === "aa" ? "" : `<button aria-label="Filter ${name}"><span class="arrow"></span></button>`;
    return `<th class="${name === "aankomst" ? "selected" : ""}"><div class="head-cell">${name}${filter}</div></th>`;
}).join("");

document.getElementById("rows").innerHTML = rides.map((ride, i) => {
    const [client, wn, time, from, to, km, price] = ride;
    const row = i + 2;
    const cells = [i + 1, client, wn, "01-sep-2000", time, from, to, km,
        price ? price + " €" : "", ...drivers[wn], ""];
    const tds = cells.map((value, c) => {
        const names = [];
        if (numeric.includes(c)) names.push("num");
        if (c === 11) names.push("zip");
        if (row === 20 && c === 6) names.push("cursor");
        return `<td class="${names.join(" ")}">${value}</td>`;
    }).join("");
    return `<tr><th class="${row === 20 ? "selected" : ""}">${row}</th>${tds}</tr>`;
}).join("");
```
